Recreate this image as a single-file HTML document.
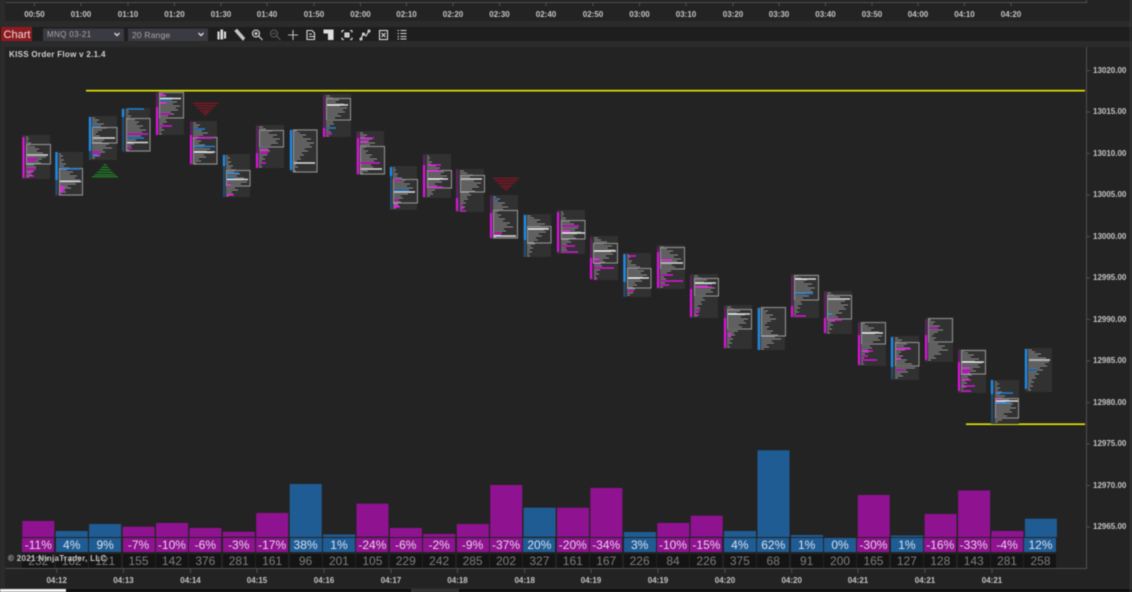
<!DOCTYPE html>
<html><head><meta charset="utf-8"><style>
html,body{margin:0;padding:0;background:#2a2a2a}
#r{position:relative;width:1132px;height:592px;overflow:hidden;background:#2b2b2b;font-family:"Liberation Sans",sans-serif;filter:blur(.4px)}
#r div{position:absolute}
.t{font-size:8px;font-weight:bold;color:#c4c4c4;white-space:nowrap;transform:translateX(-50%);line-height:10px}
.y{font-size:8px;font-weight:bold;color:#c4c4c4;left:1093px;line-height:10px}
.g{display:grid;grid-template-columns:repeat(31,33.42px);left:22.3px}
#r .g div{position:static;width:32px;height:100%;text-align:center}
.p{top:538px;height:14px;font-size:12px;line-height:14px;color:#e8d4e8}
#r .p div{background:#8f1290}
#r .p div.u{background:#205c94;color:#d6e2ee}
.n{top:554px;height:14px;font-size:12px;line-height:14px;color:#7e7e7e}
#r .n div{background:#141414}
svg{position:absolute;left:0;top:0}
.m{stroke:#e010e0;stroke-width:2.2;fill:none}
.b{stroke:#1e8ae8;stroke-width:2.4;fill:none}
.md{stroke:#701a74;stroke-width:1.5;fill:none}
.bd{stroke:#1c5488;stroke-width:1.5;fill:none}
.hm{stroke:#e010e0;stroke-width:1.4;fill:none}
.hb{stroke:#1f80d8;stroke-width:1.4;fill:none}
.hw{stroke:#e0e0e0;stroke-width:1.5;fill:none}
.bx{fill:none;stroke:#909090;stroke-width:1.1}
.pf{stroke:#8e8e8e;stroke-width:1;fill:none}
</style></head><body><div id="r">
<div style="left:5px;top:0;width:1125px;height:21px;background:#232323"></div>
<div style="left:0;top:27px;width:1132px;height:14px;background:#1e1e1e"></div>
<div style="left:5px;top:47px;width:1125px;height:541px;background:#232323"></div>
<div style="left:0;top:589px;width:66px;height:3px;background:#f4f4f4"></div>
<div style="left:66px;top:589px;width:1066px;height:3px;background:#0d0d0d"></div>
<div style="left:411px;top:589px;width:48px;height:3px;background:#333"></div>

<svg width="1132" height="592" viewBox="0 0 1132 592">
<defs>
<path id="pA" class="pf" d="M3 2h2m-2 2h3m-3 2h2m-2 2h5m-5 2h4m-4 2h9m-9 2h13m-13 2h11m-11 2h17m-17 2h14m-14 2h20m-20 2h16m-16 2h13m-13 2h15m-15 2h8m-8 2h10m-10 2h6m-6 2h8m-8 2h5m-5 2h6m-6 2h3"/>
<path id="pB" class="pf" d="M3 2h4m-4 2h7m-7 2h13m-13 2h10m-10 2h18m-18 2h14m-14 2h21m-21 2h17m-17 2h19m-19 2h12m-12 2h15m-15 2h9m-9 2h11m-11 2h7m-7 2h8m-8 2h4m-4 2h6m-6 2h3m-3 2h5m-5 2h2m-2 2h3"/>
<path id="pC" class="pf" d="M3 2h2m-2 2h4m-4 2h2m-2 2h5m-5 2h3m-3 2h7m-7 2h5m-5 2h10m-10 2h8m-8 2h14m-14 2h11m-11 2h18m-18 2h16m-16 2h21m-21 2h15m-15 2h17m-17 2h9m-9 2h12m-12 2h6m-6 2h7m-7 2h3"/>
<path id="pD" class="pf" d="M3 2h3m-3 2h7m-7 2h5m-5 2h12m-12 2h9m-9 2h15m-15 2h10m-10 2h6m-6 2h4m-4 2h8m-8 2h6m-6 2h12m-12 2h10m-10 2h17m-17 2h14m-14 2h20m-20 2h11m-11 2h13m-13 2h6m-6 2h8m-8 2h3"/>
</defs>

<!-- frame lines -->
<g stroke="#505050" stroke-width="1" fill="none">
<path d="M5.5 2.5H1086.500V0"/>
<path d="M1086.500 47V568.500H5.500"/>
<path d="M34.500 3v3M81 3v3M128 3v3M174.500 3v3M221 3v3M267 3v3M314 3v3M360.500 3v3M406.500 3v3M453 3v3M499.500 3v3M546 3v3M593 3v3M639.500 3v3M686 3v3M733 3v3M779 3v3M825.500 3v3M872 3v3M918 3v3M964.500 3v3M1011 3v3"/>
<path d="M56.700 569v4M123.500 569v4M190.500 569v4M257 569v4M324 569v4M391 569v4M457.500 569v4M524.700 569v4M591 569v4M658 569v4M725 569v4M791.700 569v4M858 569v4M925 569v4M992 569v4"/>
<path d="M1087 70.500h3M1087 112h3M1087 153.500h3M1087 195h3M1087 236.500h3M1087 278h3M1087 319.500h3M1087 361h3M1087 402.500h3M1087 444h3M1087 485.500h3M1087 527h3"/>
</g>
<path d="M1130.500 0V592" stroke="#3a3a3a"/>

<!-- yellow lines -->
<path d="M86 90.700H1085M966 424.200H1085" stroke="#e6e600" stroke-width="1.600"/>

<!-- triangles -->
<g fill="#1f7524"><path d="M103.500 164h3v1.500h-3zM101.500 166.500h7v1.500h-7zM99.500 169h11v1.500h-11zM97 171.500h16v1.500H97zM94.500 174h21v1.500h-21zM92 176h26v1.500H92z"/></g>
<g fill="#761824"><path d="M193 102.500h25v1.500h-25zM195 105h21v1.500h-21zM197.500 107.500h16v1.500h-16zM200 110h11v1.500h-11zM202.500 112h6v1.500h-6zM204 114h3v1.500h-3z"/>
<path d="M493 177.500h26v1.500h-26zM495 180h22v1.500h-22zM497.500 182.500h17v1.500h-17zM500 185h12v1.500h-12zM502.500 187h7v1.500h-7zM504.500 189h3v1.500h-3z"/></g>

<!-- panels -->
<g fill="#313131">
<rect x="22" y="135" width="28" height="44"/><rect x="55" y="152" width="28" height="44"/><rect x="89" y="116" width="28" height="44"/><rect x="122" y="108" width="28" height="44"/><rect x="156" y="92" width="28" height="43"/><rect x="190" y="121" width="27" height="44"/><rect x="223" y="154" width="27" height="43"/><rect x="256" y="125" width="28" height="43"/><rect x="290" y="129" width="27" height="43"/><rect x="323" y="94" width="28" height="43"/><rect x="356" y="131" width="28" height="44"/><rect x="390" y="166" width="27" height="44"/><rect x="423" y="154" width="28" height="44"/><rect x="456" y="169" width="28" height="43"/><rect x="490" y="195" width="28" height="44"/><rect x="523" y="214" width="28" height="43"/><rect x="557" y="210" width="28" height="44"/><rect x="590" y="236" width="28" height="44"/><rect x="623" y="253" width="28" height="44"/><rect x="657" y="245" width="28" height="44"/><rect x="690" y="274" width="28" height="44"/><rect x="724" y="305" width="28" height="44"/><rect x="757" y="307" width="28" height="43"/><rect x="791" y="274" width="28" height="44"/><rect x="824" y="291" width="28" height="43"/><rect x="858" y="322" width="28" height="44"/><rect x="891" y="336" width="28" height="44"/><rect x="925" y="318" width="28" height="44"/><rect x="958" y="349" width="28" height="44"/><rect x="991" y="380" width="28" height="44"/><rect x="1025" y="348" width="27" height="44"/>
</g>

<!-- gray profiles -->
<use href="#pA" x="23" y="135"/><use href="#pC" x="56" y="152"/><use href="#pD" x="89" y="116"/><use href="#pA" x="123" y="108"/><use href="#pB" x="156" y="92"/><use href="#pD" x="190" y="121"/><use href="#pC" x="223" y="154"/><use href="#pB" x="256" y="125"/><use href="#pB" x="290" y="129"/><use href="#pB" x="323" y="94"/><use href="#pD" x="357" y="131"/><use href="#pA" x="390" y="166"/><use href="#pA" x="424" y="154"/><use href="#pB" x="457" y="169"/><use href="#pD" x="490" y="195"/><use href="#pB" x="524" y="214"/><use href="#pA" x="558" y="210"/><use href="#pB" x="591" y="236"/><use href="#pA" x="624" y="253"/><use href="#pB" x="657" y="245"/><use href="#pB" x="691" y="274"/><use href="#pB" x="724" y="305"/><use href="#pD" x="758" y="307"/><use href="#pB" x="791" y="274"/><use href="#pB" x="824" y="291"/><use href="#pB" x="858" y="322"/><use href="#pD" x="892" y="336"/><use href="#pD" x="925" y="318"/><use href="#pB" x="958" y="349"/><use href="#pC" x="992" y="380"/><use href="#pB" x="1025" y="348"/>

<!-- value boxes -->
<g class="bx">
<rect x="26.500" y="144.500" width="24" height="19.500"/><rect x="59.500" y="168.500" width="23" height="26.500"/><rect x="92.500" y="127.500" width="24.500" height="15.500"/><rect x="126.500" y="118.500" width="23.500" height="32.500"/><rect x="159.500" y="92.500" width="24" height="25.500"/><rect x="193.500" y="137.500" width="23.500" height="26.500"/><rect x="226.500" y="170.500" width="23.500" height="15.500"/><rect x="259.500" y="130.500" width="24" height="16.500"/><rect x="293.500" y="130" width="23.500" height="42"/><rect x="326.500" y="98.500" width="24" height="21.500"/><rect x="360.500" y="146.500" width="24" height="27.500"/><rect x="393.500" y="179.500" width="24" height="23.500"/><rect x="427.500" y="170.500" width="24" height="17.500"/><rect x="460.500" y="175.500" width="24" height="16.500"/><rect x="493.500" y="210.500" width="24" height="27.500"/><rect x="527.500" y="226.500" width="23.500" height="16.500"/><rect x="561.500" y="220.500" width="23.500" height="18.500"/><rect x="593.500" y="243.500" width="24" height="19.500"/><rect x="627.500" y="268.500" width="23.500" height="19.500"/><rect x="660.500" y="247.500" width="24" height="21.500"/><rect x="694.500" y="278.500" width="24" height="17.500"/><rect x="727.500" y="309.500" width="24" height="19.500"/><rect x="761.500" y="307.500" width="24" height="28.500"/><rect x="794.500" y="275.500" width="24" height="24.500"/><rect x="827.500" y="295.500" width="24" height="23.500"/><rect x="861.500" y="322.500" width="24" height="21.500"/><rect x="895.500" y="342.500" width="23.500" height="23.500"/><rect x="928.500" y="318.500" width="24" height="23.500"/><rect x="961.500" y="350.500" width="24" height="23.500"/><rect x="995.500" y="398.500" width="23" height="19.500"/>
</g>

<!-- side bars -->
<path class="md" d="M157 93V107M191 122V135M257 126V153M324 95V128M358 132V138M424 155V165M457 169V198M491 197V213M591 238V258M658 247V252M691 276V289M725 307V318M792 276V306M825 292V318M859 323V335M926 320V335M959 350V362"/>
<path class="bd" d="M56.500 180V195M90 151V160M123 117V151M224 166V197M391 176V209M525 240V257M624.500 282V297M892 367V379M992 394V423"/>
<path class="m" d="M23.500 137V178M157 107V135M191 135V164M257 153V168M324 128V137M358 138V174M424 165V197M457 198V211M491 213V238M558 212V252M591 258V279M658 252V288M691 289V317M725 318V348M792 306V317M825 318V333M859 335V365M926 335V360M959 362V391"/>
<path class="b" d="M56.500 152V180M90 117V151M123 109V117M224 155V166M291 130V170M391 167V176M525 215V240M624.500 254V282M759 308V350M892 337V367M992 380V394M1026 349V389"/>

<!-- highlights -->
<path class="hm" d="M27 159h10M27 161h8M27 169h9M27 172h6M27 176h7M60 187h5M60 189h4M60 191h3M60 194h2M93 152h6M93 154h8M127 134h21M127 148h5M160 95h6M160 103h6M160 114h11M160 126h12M194 138h19M227 185h4M227 195h7M260 150h9M260 153h8M260 163h6M327 134h5M360 138h14M360 142h8M360 163h20M394 180h7M394 200h5M394 205h4M394 207h6M428 165h13M428 171h13M428 187h15M461 205h2M461 208h3M461 211h5M494 233h8M562 226h17M562 231h8M562 246h13M562 252h16M594 259h5M594 262h6M594 268h20M594 279h3M628 256h8M628 291h6M661 260h11M661 275h12M661 281h22M661 285h8M695 287h17M695 310h5M695 315h4M728 334h3M728 336h3M795 316h11M828 320h14M862 351h11M862 356h6M862 360h15M896 349h15M896 359h5M896 370h8M929 328h9M962 368h8M962 371h9M962 373h6M962 380h9M962 386h13M962 391h9M996 400h5"/>
<path class="hb" d="M60 169h20M93 126h5M93 155h5M127 109h17M127 138h17M160 100h12M194 129h11M194 146.500h21M227 173h12M227 178h7M327 128h9M394 190h15M494 199h4M795 293.500h18M828 314h4M996 393h17M996 403h15M1029 370h8"/>
<path class="hw" d="M27 155h21M60 181.500h21M93 138h22M127 142.500h21M160 98.500h21M194 152h21M227 179.500h21M294 163h21M327 105h21M361 169h21M394 192h21M428 179h20M461 179h21M494 236h22M528 229h21M562 233h23M594 251h22M628 278h21M661 263h22M695 283h21M728 314h22M795 279h21M828 299h22M862 333h21M962 362h22M996 401h22M1029 360h21"/>

<!-- volume bars -->
<g fill="#8f1290">
<rect x="22.300" y="521" width="32" height="16"/><rect x="122.600" y="526.700" width="32" height="10"/><rect x="156" y="523" width="32" height="14"/><rect x="189.400" y="528" width="32" height="9"/><rect x="222.800" y="531.700" width="32" height="5"/><rect x="256.200" y="513" width="32" height="24"/><rect x="356.500" y="503.700" width="32" height="33"/><rect x="389.900" y="528" width="32" height="9"/><rect x="423.300" y="534" width="32" height="3"/><rect x="456.800" y="524" width="32" height="13"/><rect x="490.200" y="485" width="32" height="52"/><rect x="557" y="507.700" width="32" height="29"/><rect x="590.400" y="488" width="32" height="49"/><rect x="657.300" y="523" width="32" height="14"/><rect x="690.700" y="515.700" width="32" height="21"/><rect x="857.800" y="495" width="32" height="42"/><rect x="924.600" y="514" width="32" height="23"/><rect x="958.100" y="490.500" width="32" height="46.500"/><rect x="991.500" y="531" width="32" height="6"/>
</g>
<g fill="#205c94">
<rect x="55.700" y="531" width="32" height="6"/><rect x="89.100" y="524" width="32" height="13"/><rect x="289.700" y="484" width="32" height="53"/><rect x="323.100" y="534.500" width="32" height="2.500"/><rect x="523.600" y="507.700" width="32" height="29"/><rect x="623.900" y="532" width="32" height="5"/><rect x="724.100" y="531" width="32" height="6"/><rect x="757.500" y="450.300" width="32" height="86.700"/><rect x="791" y="535" width="32" height="2"/><rect x="891.200" y="535.500" width="32" height="1.500"/><rect x="1024.900" y="518.700" width="32" height="18.300"/>
</g>

<!-- Chart button and dropdowns -->
<rect x="1" y="27" width="31" height="14" fill="#8d1a20"/>
<rect x="43" y="28.500" width="81" height="12.500" fill="#3a3a42"/>
<rect x="128" y="28.500" width="80" height="12.500" fill="#3a3a42"/>
<path d="M114.500 33l2.500 2.500 2.500-2.500M198.500 33l2.500 2.500 2.500-2.500" fill="none" stroke="#d8d8d8" stroke-width="1.400"/>

<!-- toolbar icons -->
<g fill="none" stroke="#dcdcdc" stroke-width="1.100">
<path d="M218 32h1v7h-1zM221 30h1.500v9H221zM224.500 32h1v6h-1z" fill="#dcdcdc"/>
<path d="M235 31l2-1.500 7.500 8.500-1.500 2z" fill="#c4c4c4" stroke="#c4c4c4"/>
<circle cx="256" cy="33.500" r="3.500"/><path d="M258.500 36l4 4M254 33.500h4M256 31.500v4"/>
<g stroke="#5c5c5c"><circle cx="274" cy="33.500" r="3.500"/><path d="M276.500 36l4 4M272 33.500h4"/></g>
<path d="M293 30v10M288 35h10" stroke="#bcbcbc"/>
<path d="M307 30.500h5l2.500 2.500v6.500H307zM309 34h3M309 36.500h5"/>
<path d="M324 30h4v3h-4zM328.500 30h4.500v9.500h-4.500z" fill="#e0e0e0"/>
<path d="M342 30.500h2M350 30.500h2M342 39.500h2M350 39.500h2M342 30.500v2M352 30.500v2M342 37.500v2M352 37.500v2"/><path d="M345 33h4v4h-4z" fill="#c4c4c4"/>
<path d="M361 39l2-5 3 2 3-5"/><circle cx="361" cy="39" r="1"/><circle cx="363.500" cy="34" r="1"/><circle cx="369" cy="31" r="1"/>
<rect x="379.500" y="30.500" width="8" height="9"/><path d="M381.500 33l4 4M385.500 33l-4 4"/>
<path d="M397.500 30.500h1.500M397.500 33.500h1.500M397.500 36.500h1.500M397.500 39h1.500M400.500 30.500h6M400.500 33.500h6M400.500 36.500h6M400.500 39h6"/>
</g>
</svg>

<!-- text -->
<div style="left:3px;top:28px;width:28px;height:14px;font-size:11px;line-height:14px;color:#f0dcdc;text-align:center">Chart</div>
<div style="left:47px;top:29px;font-size:8px;line-height:12px;color:#a8a8a8;letter-spacing:.35px;white-space:nowrap">MNQ 03-21</div>
<div style="left:132px;top:29px;font-size:8.500px;line-height:12px;color:#a8a8a8;letter-spacing:.2px;white-space:nowrap">20 Range</div>
<div style="left:9px;top:50px;font-size:8px;font-weight:bold;line-height:10px;color:#d0d0d0;letter-spacing:.3px;white-space:nowrap">KISS Order Flow v 2.1.4</div>

<div class="t" style="left:34.500px;top:10px">00:50</div><div class="t" style="left:81px;top:10px">01:00</div><div class="t" style="left:128px;top:10px">01:10</div><div class="t" style="left:174.500px;top:10px">01:20</div><div class="t" style="left:221px;top:10px">01:30</div><div class="t" style="left:267px;top:10px">01:40</div><div class="t" style="left:314px;top:10px">01:50</div><div class="t" style="left:360.500px;top:10px">02:00</div><div class="t" style="left:406.500px;top:10px">02:10</div><div class="t" style="left:453px;top:10px">02:20</div><div class="t" style="left:499.500px;top:10px">02:30</div><div class="t" style="left:546px;top:10px">02:40</div><div class="t" style="left:593px;top:10px">02:50</div><div class="t" style="left:639.500px;top:10px">03:00</div><div class="t" style="left:686px;top:10px">03:10</div><div class="t" style="left:733px;top:10px">03:20</div><div class="t" style="left:779px;top:10px">03:30</div><div class="t" style="left:825.500px;top:10px">03:40</div><div class="t" style="left:872px;top:10px">03:50</div><div class="t" style="left:918px;top:10px">04:00</div><div class="t" style="left:964.500px;top:10px">04:10</div><div class="t" style="left:1011px;top:10px">04:20</div>

<div class="y" style="top:65.500px">13020.00</div><div class="y" style="top:107px">13015.00</div><div class="y" style="top:148.500px">13010.00</div><div class="y" style="top:190px">13005.00</div><div class="y" style="top:231.500px">13000.00</div><div class="y" style="top:273px">12995.00</div><div class="y" style="top:314.500px">12990.00</div><div class="y" style="top:356px">12985.00</div><div class="y" style="top:397.500px">12980.00</div><div class="y" style="top:439px">12975.00</div><div class="y" style="top:480.500px">12970.00</div><div class="y" style="top:522px">12965.00</div>

<div class="g p"><div>-11%</div><div class="u">4%</div><div class="u">9%</div><div>-7%</div><div>-10%</div><div>-6%</div><div>-3%</div><div>-17%</div><div class="u">38%</div><div class="u">1%</div><div>-24%</div><div>-6%</div><div>-2%</div><div>-9%</div><div>-37%</div><div class="u">20%</div><div>-20%</div><div>-34%</div><div class="u">3%</div><div>-10%</div><div>-15%</div><div class="u">4%</div><div class="u">62%</div><div class="u">1%</div><div class="u">0%</div><div>-30%</div><div class="u">1%</div><div>-16%</div><div>-33%</div><div>-4%</div><div class="u">12%</div></div>
<div class="g n"><div>232</div><div>162</div><div>121</div><div>155</div><div>142</div><div>376</div><div>281</div><div>161</div><div>96</div><div>201</div><div>105</div><div>229</div><div>242</div><div>285</div><div>202</div><div>327</div><div>161</div><div>167</div><div>226</div><div>84</div><div>226</div><div>375</div><div>68</div><div>91</div><div>200</div><div>165</div><div>127</div><div>128</div><div>143</div><div>281</div><div>258</div></div>

<div style="left:8px;top:554px;font-size:8px;font-weight:bold;line-height:10px;color:#c4c4c4;letter-spacing:.3px;white-space:nowrap">© 2021 NinjaTrader, LLC</div>

<div class="t" style="left:56.700px;top:576px">04:12</div><div class="t" style="left:123.500px;top:576px">04:13</div><div class="t" style="left:190.500px;top:576px">04:14</div><div class="t" style="left:257px;top:576px">04:15</div><div class="t" style="left:324px;top:576px">04:16</div><div class="t" style="left:391px;top:576px">04:17</div><div class="t" style="left:457.500px;top:576px">04:18</div><div class="t" style="left:524.700px;top:576px">04:18</div><div class="t" style="left:591px;top:576px">04:19</div><div class="t" style="left:658px;top:576px">04:19</div><div class="t" style="left:725px;top:576px">04:20</div><div class="t" style="left:791.700px;top:576px">04:20</div><div class="t" style="left:858px;top:576px">04:21</div><div class="t" style="left:925px;top:576px">04:21</div><div class="t" style="left:992px;top:576px">04:21</div>
</div></body></html>
